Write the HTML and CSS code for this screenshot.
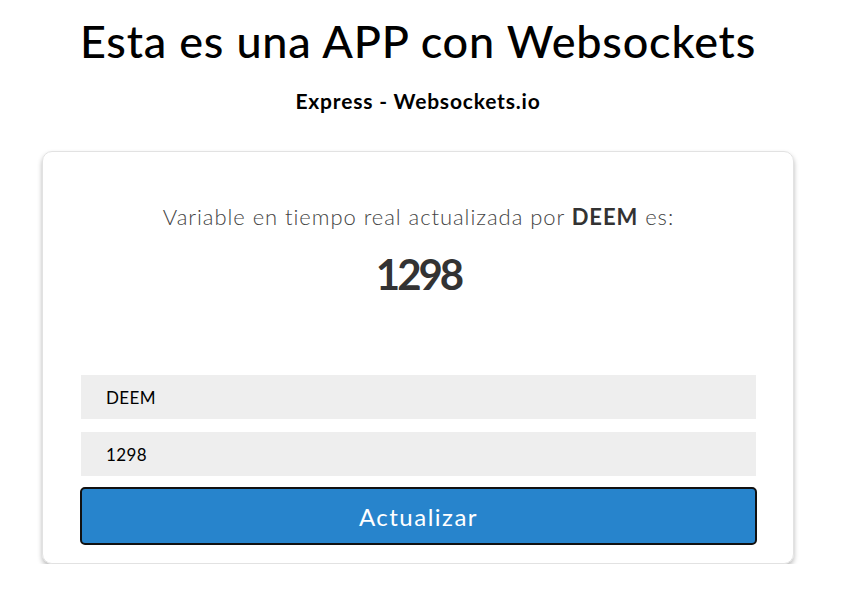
FILE: index.html
```html
<!DOCTYPE html>
<html lang="es">
<head>
<meta charset="utf-8">
<title>Websockets</title>
<link rel="stylesheet" href="styles.css">
</head>
<body>
<div class="page">
  <h1 class="title">Esta es una APP con Websockets</h1>
  <h3 class="subtitle">Express - Websockets.io</h3>
  <div class="card">
    <p class="label">Variable en tiempo real actualizada por <strong>DEEM</strong> es:</p>
    <p class="value">1298</p>
    <form class="form">
      <input class="field" type="text" value="DEEM">
      <input class="field" type="text" value="1298">
      <button class="btn" type="button">Actualizar</button>
    </form>
  </div>
</div>
</body>
</html>
```
FILE: styles.css
```css
html, body {
  margin: 0;
  padding: 0;
  background: #fff;
}
body {
  font-family: Lato, "Noto Sans", sans-serif;
  color: #000;
}
.page {
  width: 836px;
  display: flex;
  flex-direction: column;
  align-items: center;
}
.title {
  margin: 14px 0 0;
  font-size: 45px;
  font-weight: 500;
  line-height: 54px;
  letter-spacing: 0.8px;
}
.subtitle {
  margin: 20px 0 0;
  font-size: 21px;
  font-weight: 700;
  line-height: 26px;
  letter-spacing: 0.8px;
}
.card {
  box-sizing: border-box;
  width: 752px;
  margin-top: 37px;
  padding: 50px 37px 18px 38px;
  border: 1px solid #e2e2e2;
  border-radius: 10px;
  box-shadow: 0 3px 5px rgba(0,0,0,0.28);
  display: flex;
  flex-direction: column;
  align-items: center;
}
.label {
  margin: 0;
  font-size: 22px;
  font-weight: 300;
  line-height: 30px;
  color: #444;
  letter-spacing: 0.95px;
}
.label strong {
  font-weight: 700;
  color: #333;
}
.value {
  margin: 18px 0 0;
  font-size: 42px;
  font-weight: 700;
  line-height: 48px;
  color: #333;
  letter-spacing: -3px;
}
.form {
  margin-top: 77px;
  width: 100%;
  display: flex;
  flex-direction: column;
  gap: 13px;
}
.field {
  box-sizing: border-box;
  height: 44px;
  border: none;
  background: #eee;
  padding: 0 25px;
  font-family: inherit;
  font-size: 17px;
  color: #000;
  outline: none;
  letter-spacing: 0.4px;
}
.btn {
  margin: -2px -1px 0;
  height: 58px;
  border: 2px solid #111;
  border-radius: 5px;
  background: #2784cc;
  color: #fff;
  font-family: inherit;
  font-size: 24px;
  letter-spacing: 1.5px;
}
```
